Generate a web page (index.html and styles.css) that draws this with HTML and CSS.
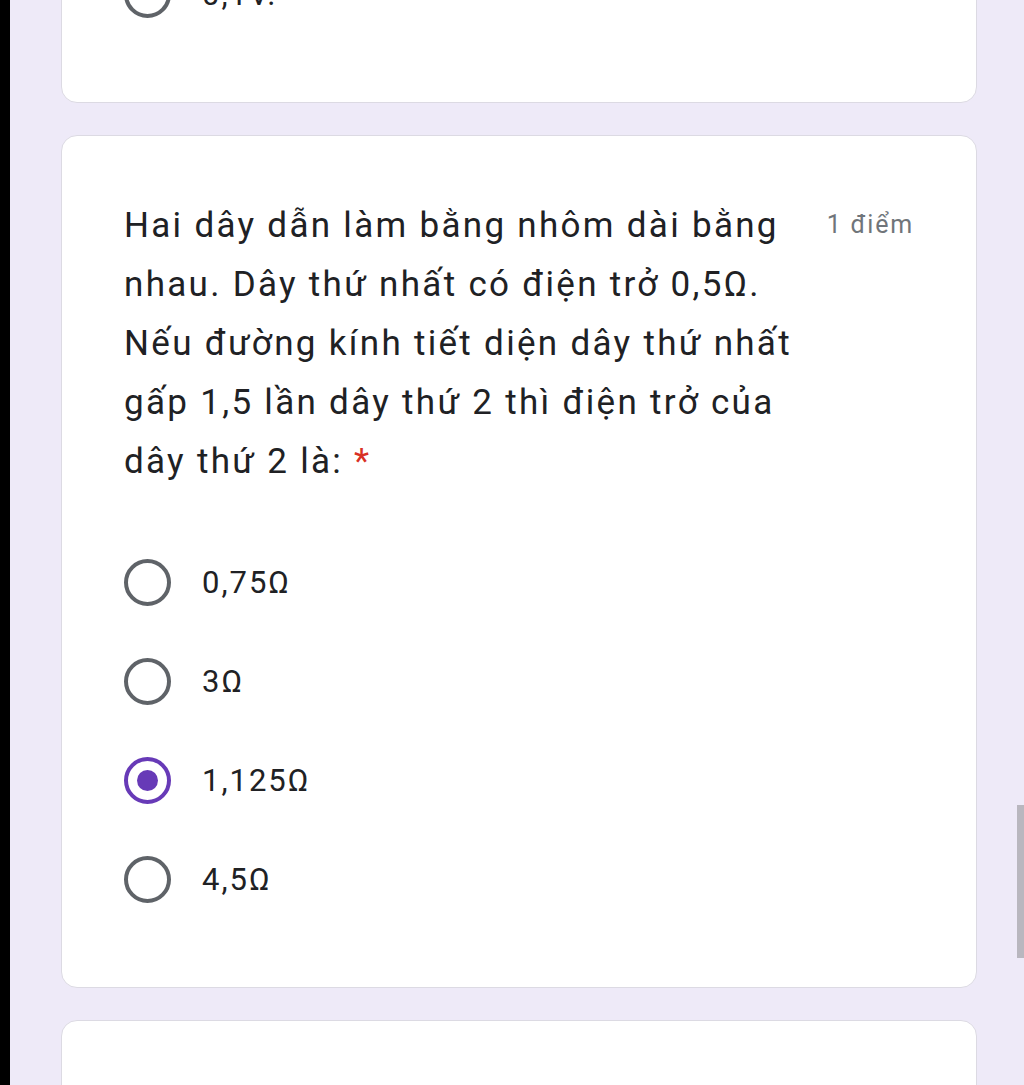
FILE: index.html
```html
<!DOCTYPE html>
<html lang="vi">
<head>
<meta charset="utf-8">
<title>Form</title>
<link rel="stylesheet" href="styles.css">
</head>
<body>
<div class="app">
  <div class="edge"></div>
  <main class="page">
    <section class="card card-top">
      <div class="options">
        <label class="option"><span class="radio"></span><span class="opt-text">0,1V.</span></label>
      </div>
    </section>

    <section class="card">
      <div class="title-row">
        <div class="title">Hai dây dẫn làm bằng nhôm dài bằng nhau. Dây thứ nhất có điện trở 0,5Ω. Nếu đường kính tiết diện dây thứ nhất gấp 1,5 lần dây thứ 2 thì điện trở của dây thứ 2 là: <span class="req">*</span></div>
        <div class="points">1 điểm</div>
      </div>
      <div class="options">
        <label class="option"><span class="radio"></span><span class="opt-text">0,75Ω</span></label>
        <label class="option"><span class="radio"></span><span class="opt-text">3Ω</span></label>
        <label class="option"><span class="radio checked"></span><span class="opt-text">1,125Ω</span></label>
        <label class="option"><span class="radio"></span><span class="opt-text">4,5Ω</span></label>
      </div>
    </section>

    <section class="card card-bottom"></section>
  </main>
</div>
<div class="scrollbar"></div>
</body>
</html>
```

FILE: styles.css
```css
html, body {
  margin: 0;
  padding: 0;
  height: 1085px;
  overflow: hidden;
  background: #eeeaf8;
  font-family: Roboto, "Noto Sans", sans-serif;
  color: #202124;
}

.app {
  display: flex;
  min-height: 1085px;
}

.edge {
  width: 10px;
  flex: none;
  background: #000;
}

.page {
  flex: 1;
  padding-left: 51px;
  display: flex;
  flex-direction: column;
  gap: 32px;
}

.card {
  width: 916px;
  background: #fff;
  border: 1px solid #dcdae3;
  border-radius: 16px;
  box-sizing: border-box;
  padding: 60px 62px 58px 62px;
  flex: none;
}

.card-top {
  margin-top: -80px;
  padding-top: 24px;
  padding-bottom: 59px;
  height: 183px;
}

.card-bottom {
  height: 200px;
}

.title-row {
  display: flex;
  align-items: flex-start;
}

.title {
  width: 690px;
  font-size: 35px;
  line-height: 59px;
  letter-spacing: 2.3px;
  color: #202124;
}

.req {
  color: #d93025;
}

.points {
  margin-left: auto;
  padding-top: 14px;
  font-size: 25px;
  line-height: 30px;
  color: #70757a;
  letter-spacing: 1.8px;
}

.options {
  display: flex;
  flex-direction: column;
  margin-top: 42px;
}

.card-top .options {
  margin-top: 0;
}

.option {
  height: 99px;
  display: flex;
  align-items: center;
  gap: 31px;
}

.radio {
  width: 47px;
  height: 47px;
  box-sizing: border-box;
  border: 4px solid #5f6368;
  border-radius: 50%;
  flex: none;
  display: flex;
  align-items: center;
  justify-content: center;
}

.radio.checked {
  border-color: #673ab7;
}

.radio.checked::after {
  content: "";
  width: 21px;
  height: 21px;
  border-radius: 50%;
  background: #673ab7;
}

.opt-text {
  font-size: 31px;
  letter-spacing: 2px;
  color: #202124;
}

.scrollbar {
  position: fixed;
  right: 0;
  top: 805px;
  width: 7px;
  height: 153px;
  background: #b9b7bf;
}
```
